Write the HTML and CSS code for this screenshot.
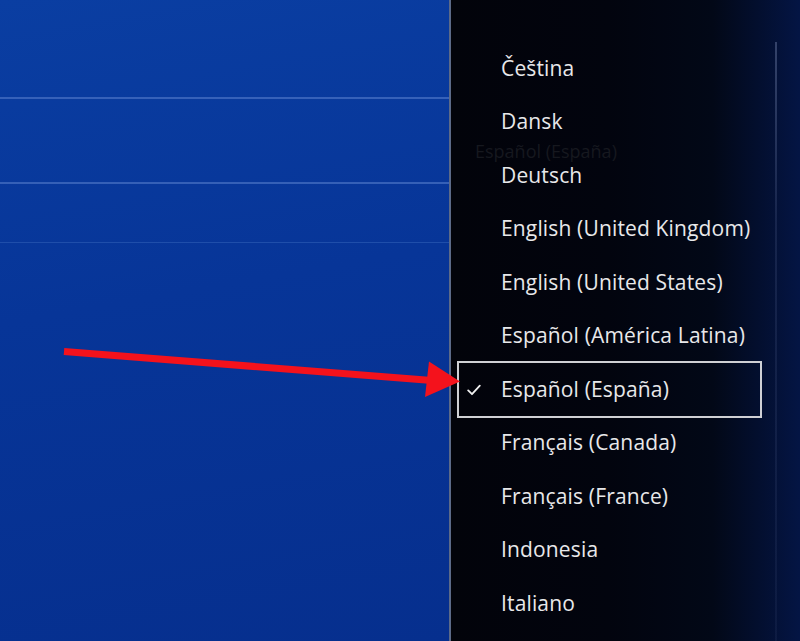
FILE: index.html
```html
<!DOCTYPE html>
<html lang="es">
<head>
<meta charset="utf-8">
<title>Idioma del sistema</title>
<link rel="stylesheet" href="styles.css">
</head>
<body>
<div class="screen">
  <div class="backdrop">
    <div class="band band-1"></div>
    <div class="band band-2"></div>
    <div class="band band-3"></div>
    <div class="band band-4"></div>
  </div>
  <div class="panel">
    <div class="ghost">Español (España)</div>
    <div class="scrollbar"></div>
    <ul class="list">
      <li class="item">Čeština</li>
      <li class="item">Dansk</li>
      <li class="item">Deutsch</li>
      <li class="item">English (United Kingdom)</li>
      <li class="item">English (United States)</li>
      <li class="item">Español (América Latina)</li>
      <li class="item selected">
        <svg class="check" width="14" height="12" viewBox="0 0 14 12"><path d="M1.2 6.4 L5 10.2 L12.8 1.6" fill="none" stroke="#f0f0f0" stroke-width="1.8" stroke-linecap="round" stroke-linejoin="round"/></svg>
        Español (España)
      </li>
      <li class="item">Français (Canada)</li>
      <li class="item">Français (France)</li>
      <li class="item">Indonesia</li>
      <li class="item">Italiano</li>
    </ul>
  </div>
  <svg class="arrow" width="800" height="641" viewBox="0 0 800 641">
    <line x1="64" y1="351.5" x2="432" y2="380.5" stroke="#f4121c" stroke-width="7"/>
    <polygon points="429,361.5 460,381.5 425,397" fill="#f4121c"/>
  </svg>
</div>
</body>
</html>
```
FILE: styles.css
```css
* { box-sizing: border-box; }
html, body {
  margin: 0;
  padding: 0;
  width: 800px;
  height: 641px;
  overflow: hidden;
  background: #000;
}
.screen {
  position: relative;
  display: flex;
  width: 800px;
  height: 641px;
  font-family: "Open Sans", "Noto Sans", sans-serif;
}
.backdrop {
  width: 451px;
  flex: none;
  display: flex;
  flex-direction: column;
  background: linear-gradient(170deg, #0a3ea2 0%, #073598 45%, #062f8e 100%);
  border-right: 2px solid #5c6a88;
}
.band { flex: none; }
.band-1 { height: 97px; }
.band-2 { height: 85px; border-top: 2px solid #3661b9; }
.band-3 { height: 60px; border-top: 2px solid #3560b7; }
.band-4 { flex: 1; border-top: 1px solid #1f4eaa; }
.panel {
  position: relative;
  flex: 1;
  background: linear-gradient(90deg, #02030a 0%, #02040e 45%, #020817 75%, #041544 100%);
}
.ghost {
  position: absolute;
  left: 24px;
  top: 141px;
  font-size: 18px;
  line-height: 1.2;
  color: #16181f;
  white-space: nowrap;
}
.scrollbar {
  position: absolute;
  left: 324px;
  top: 42px;
  bottom: 0;
  width: 2px;
  background: linear-gradient(180deg, rgba(110,125,165,0.45) 0%, rgba(90,105,150,0.22) 30%, rgba(80,95,140,0.12) 100%);
}
.list {
  list-style: none;
  margin: 0;
  padding: 41px 0 0 0;
}
.item {
  position: relative;
  display: flex;
  align-items: center;
  height: 53.5px;
  padding-left: 50px;
  font-size: 21px;
  letter-spacing: 0.15px;
  color: #e8e8ea;
  white-space: nowrap;
}
.item.selected::before {
  content: "";
  position: absolute;
  left: 6px;
  width: 301px;
  top: -1px;
  bottom: -2px;
  border: 2px solid #cfd0d4;
}
.check {
  position: absolute;
  left: 16px;
  top: 22px;
}
.arrow {
  position: absolute;
  left: 0;
  top: 0;
  pointer-events: none;
}
```
